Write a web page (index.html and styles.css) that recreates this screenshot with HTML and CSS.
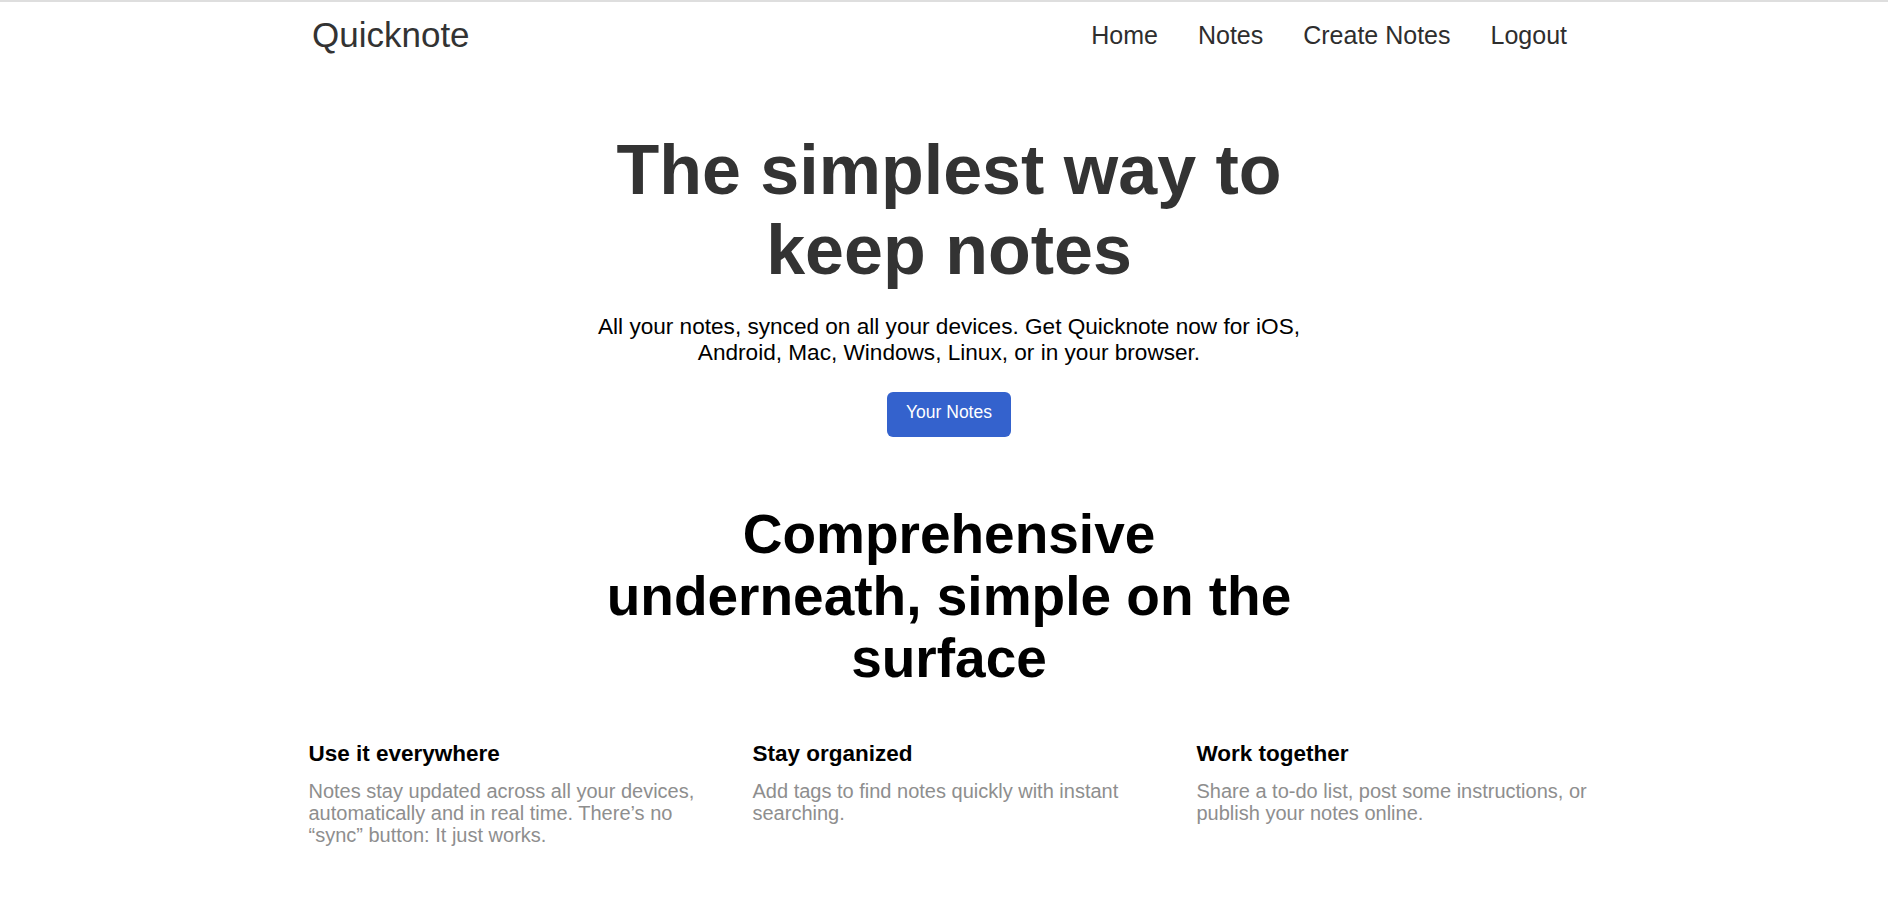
FILE: index.html
```html
<!DOCTYPE html>
<html lang="en">
<head>
<meta charset="utf-8">
<title>Quicknote</title>
<link rel="stylesheet" href="styles.css">
</head>
<body>
<div class="page">
  <header class="topbar">
    <a class="brand" href="#">Quicknote</a>
    <nav class="nav">
      <a class="nav-link" href="#">Home</a>
      <a class="nav-link" href="#">Notes</a>
      <a class="nav-link" href="#">Create Notes</a>
      <a class="nav-link" href="#">Logout</a>
    </nav>
  </header>

  <main>
    <section class="hero">
      <h1 class="hero-title">The simplest way to keep notes</h1>
      <p class="hero-lead">All your notes, synced on all your devices. Get Quicknote now for iOS, Android, Mac, Windows, Linux, or in your browser.</p>
      <a class="btn-primary" href="#">Your Notes</a>
      <h2 class="section-title">Comprehensive underneath, simple on the surface</h2>
    </section>

    <section class="features">
      <div class="feature">
        <h3 class="feature-title">Use it everywhere</h3>
        <p class="feature-text">Notes stay updated across all your devices, automatically and in real time. There’s no “sync” button: It just works.</p>
      </div>
      <div class="feature">
        <h3 class="feature-title">Stay organized</h3>
        <p class="feature-text">Add tags to find notes quickly with instant searching.</p>
      </div>
      <div class="feature">
        <h3 class="feature-title">Work together</h3>
        <p class="feature-text">Share a to-do list, post some instructions, or publish your notes online.</p>
      </div>
    </section>
  </main>
</div>
</body>
</html>
```
FILE: styles.css
```css
* {
  box-sizing: border-box;
}

html, body {
  margin: 0;
  padding: 0;
  background: #ffffff;
}

body {
  font-family: "Liberation Sans", Arial, sans-serif;
  color: #000000;
  border-top: 2px solid #dedede;
}

a {
  text-decoration: none;
}

.page {
  padding-left: 10px;
}

.topbar {
  width: 1278px;
  margin: 0 auto;
  display: flex;
  align-items: center;
  justify-content: space-between;
  padding: 12.7px 21px 12.7px 2px;
}

.brand {
  font-size: 35px;
  line-height: 40px;
  color: #333333;
}

.nav {
  display: flex;
  gap: 40px;
}

.nav-link {
  font-size: 25px;
  line-height: 30px;
  color: #2e2e2e;
}

.hero {
  width: 720px;
  margin: 0 auto;
  padding-top: 62.4px;
  display: flex;
  flex-direction: column;
  align-items: center;
  text-align: center;
}

.hero-title {
  margin: 0;
  font-size: 70px;
  line-height: 80px;
  font-weight: 700;
  color: #333333;
}

.hero-lead {
  margin: 24.4px 0 0;
  font-size: 22.6px;
  line-height: 26px;
  color: #000000;
}

.btn-primary {
  margin-top: 26px;
  height: 45px;
  padding: 0 18.7px 4px;
  line-height: 41px;
  font-size: 17.5px;
  color: #ffffff;
  background: #3462cd;
  border-radius: 6px;
}

.section-title {
  margin: 66px 0 0;
  font-size: 55px;
  line-height: 62px;
  font-weight: 700;
  color: #000000;
}

.features {
  width: 1278px;
  margin: 51.2px auto 0;
  display: grid;
  grid-template-columns: repeat(3, 400px);
  column-gap: 44px;
  position: relative;
  left: -1.5px;
}

.feature-title {
  margin: 0;
  font-size: 22.5px;
  line-height: 27px;
  font-weight: 700;
  color: #000000;
}

.feature-text {
  margin: 12.6px 0 0;
  font-size: 20px;
  line-height: 22px;
  color: #8e8e8e;
}
```
